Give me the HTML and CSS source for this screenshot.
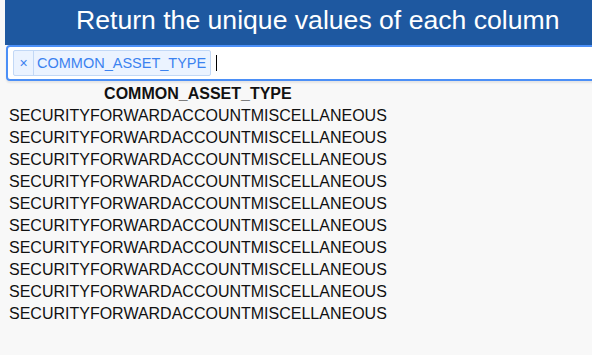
FILE: index.html
```html
<!DOCTYPE html>
<html>
<head>
  <title>Unique values</title>
  <link rel="stylesheet" href="styles.css">
</head>
<body>
  <div class="panel">
    <div class="panel-title">Return the unique values of each column</div>

    <!-- Column picker -->
    <div class="picker">
      <span class="chip"><span class="chip-remove">&times;</span><span class="chip-label">COMMON_ASSET_TYPE</span></span>
      <span class="caret"></span>
    </div>
  </div>

  <!-- Result table -->
  <table class="result">
    <thead>
      <tr><th>COMMON_ASSET_TYPE</th></tr>
    </thead>
    <tbody>
      <tr><td>SECURITYFORWARDACCOUNTMISCELLANEOUS</td></tr>
      <tr><td>SECURITYFORWARDACCOUNTMISCELLANEOUS</td></tr>
      <tr><td>SECURITYFORWARDACCOUNTMISCELLANEOUS</td></tr>
      <tr><td>SECURITYFORWARDACCOUNTMISCELLANEOUS</td></tr>
      <tr><td>SECURITYFORWARDACCOUNTMISCELLANEOUS</td></tr>
      <tr><td>SECURITYFORWARDACCOUNTMISCELLANEOUS</td></tr>
      <tr><td>SECURITYFORWARDACCOUNTMISCELLANEOUS</td></tr>
      <tr><td>SECURITYFORWARDACCOUNTMISCELLANEOUS</td></tr>
      <tr><td>SECURITYFORWARDACCOUNTMISCELLANEOUS</td></tr>
      <tr><td>SECURITYFORWARDACCOUNTMISCELLANEOUS</td></tr>
    </tbody>
  </table>
</body>
</html>
```

FILE: styles.css
```css
html {
  overflow: hidden;
}
body {
  font-family: 'Liberation Sans', Arial, sans-serif;
  background-color: #f8f8f8;
  color: #111;
  margin: 0;
}
.panel {
  margin-left: 5px;
  width: 640px;
}
.panel-title {
  background-color: #1e58a0;
  color: #fff;
  font-size: 26.6px;
  height: 45px;
  line-height: 40px;
  padding-left: 71px;
}
.picker {
  display: flex;
  align-items: center;
  gap: 5px;
  height: 32px;
  margin-left: 1px;
  padding: 0 5px;
  background-color: #fff;
  border: 2px solid #4b8ff7;
  border-radius: 4px;
  box-shadow: 0 2px 2px rgba(0, 0, 0, 0.08);
}
.chip {
  display: flex;
  align-items: stretch;
  height: 24px;
  background-color: #ebf3ff;
  border: 1px solid #c2d8f6;
  border-radius: 2px;
  color: #3b82f0;
  font-size: 14.5px;
  line-height: 25px;
}
.chip-remove {
  width: 19px;
  text-align: center;
  font-size: 14px;
  border-right: 1px solid #c2d8f6;
}
.chip-label {
  padding: 0 4px 0 3px;
}
.caret {
  width: 1px;
  height: 16px;
  background-color: #000;
}
.result {
  margin-left: 6px;
  margin-top: 1px;
  font-size: 16px;
}
```
